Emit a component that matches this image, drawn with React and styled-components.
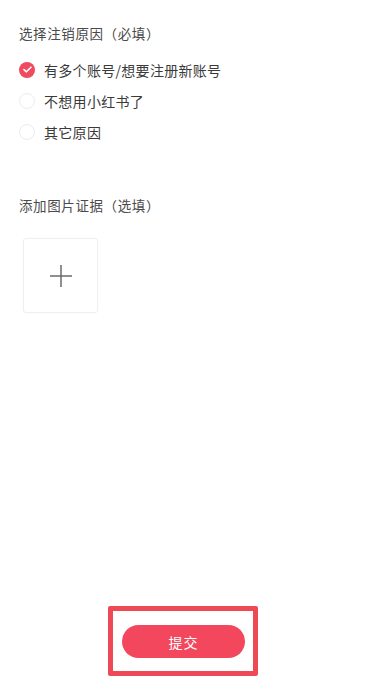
import styled, { createGlobalStyle } from "styled-components";

const GlobalStyle = createGlobalStyle`
  html, body {
    margin: 0;
    padding: 0;
    background: #fff;
  }
  body {
    font-family: "Noto Sans CJK SC", "Noto Sans", sans-serif;
  }
`;

const reasons = [
  { id: 1, label: "有多个账号/想要注册新账号", checked: true },
  { id: 2, label: "不想用小红书了", checked: false },
  { id: 3, label: "其它原因", checked: false },
];

const App = () => {
  return (
    <Page>
      <GlobalStyle />
      <Section>
        <Title>选择注销原因（必填）</Title>
        <List>
          {reasons.map((r) => (
            <Option key={r.id}>
              <Radio $checked={r.checked}>
                {r.checked && (
                  <svg width="9" height="7" viewBox="0 0 9 7">
                    <path
                      d="M1 3.6 L3.4 5.8 L8 1.2"
                      fill="none"
                      stroke="#fff"
                      strokeWidth="1.6"
                      strokeLinecap="round"
                      strokeLinejoin="round"
                    />
                  </svg>
                )}
              </Radio>
              <OptionText>{r.label}</OptionText>
            </Option>
          ))}
        </List>
      </Section>

      <Section $top={48}>
        <Title>添加图片证据（选填）</Title>
        <Upload>
          <svg width="24" height="24" viewBox="0 0 24 24">
            <path d="M12 1 V23 M1 12 H23" stroke="#6b6b6b" strokeWidth="1.5" />
          </svg>
        </Upload>
      </Section>

      <Footer>
        <Highlight>
          <SubmitButton>提交</SubmitButton>
        </Highlight>
      </Footer>
    </Page>
  );
};

const Page = styled.div`
  height: 687px;
  display: flex;
  flex-direction: column;
  box-sizing: border-box;
  padding: 23px 0 11px 19px;
`;

const Section = styled.div`
  display: flex;
  flex-direction: column;
  margin-top: ${(p) => (p.$top ? `${p.$top}px` : "0")};
`;

const Title = styled.div`
  font-size: 13.5px;
  line-height: 20px;
  color: #4a4a4a;
  letter-spacing: 0.6px;
`;

const List = styled.div`
  display: flex;
  flex-direction: column;
  margin-top: 11px;
`;

const Option = styled.div`
  display: flex;
  align-items: center;
  height: 31px;
`;

const Radio = styled.div`
  width: 16px;
  height: 16px;
  border-radius: 50%;
  box-sizing: border-box;
  display: flex;
  align-items: center;
  justify-content: center;
  background: ${(p) => (p.$checked ? "#ef4a5e" : "#fff")};
  border: ${(p) => (p.$checked ? "none" : "1px solid #ececec")};
`;

const OptionText = styled.span`
  margin-left: 9px;
  font-size: 14px;
  color: #3a3a3a;
  letter-spacing: 0.3px;
`;

const Upload = styled.div`
  margin: 23px 0 0 4px;
  width: 75px;
  height: 75px;
  box-sizing: border-box;
  border: 1px solid #efefef;
  border-radius: 3px;
  box-shadow: 0 0 2px rgba(0, 0, 0, 0.04);
  display: flex;
  align-items: center;
  justify-content: center;
`;

const Footer = styled.div`
  margin-top: auto;
  display: flex;
  padding-left: 89px;
`;

const Highlight = styled.div`
  width: 150px;
  height: 70px;
  box-sizing: border-box;
  border: 5px solid #ee4a55;
  border-radius: 2px;
  padding: 14px 8px 13px 9px;
  display: flex;
`;

const SubmitButton = styled.button`
  flex: 1;
  border: none;
  border-radius: 17px;
  background: #f2475c;
  color: #fff;
  font-family: "Noto Sans CJK SC", sans-serif;
  font-size: 14px;
  letter-spacing: 1px;
  padding: 0;
  cursor: pointer;
`;

export default App;
